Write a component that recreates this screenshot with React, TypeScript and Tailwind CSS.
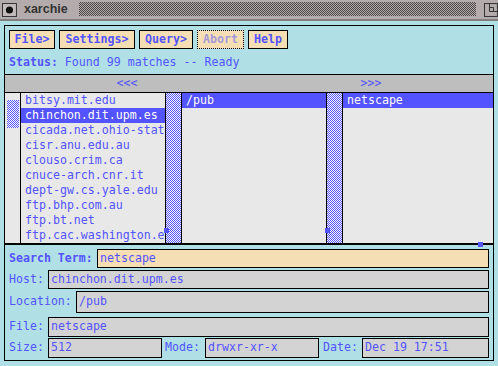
import React from 'react';

const mono = "font-['DejaVu_Sans_Mono',monospace] text-[11.6px]";

const hosts = [
  'bitsy.mit.edu',
  'chinchon.dit.upm.es',
  'cicada.net.ohio-state.edu',
  'cisr.anu.edu.au',
  'clouso.crim.ca',
  'cnuce-arch.cnr.it',
  'dept-gw.cs.yale.edu',
  'ftp.bhp.com.au',
  'ftp.bt.net',
  'ftp.cac.washington.edu',
];

// 1px stipple, drawn as an svg pattern so it stays crisp.
// `flip` shifts the phase so stipples line up with the window origin.
function Stipple({
  id,
  fg,
  bg,
  className,
  flip,
}: {
  id: string;
  fg: string;
  bg: string;
  className: string;
  flip?: boolean;
}) {
  const a = flip ? 0 : 1;
  const b = flip ? 1 : 0;
  return (
    <svg className={'block ' + className} shapeRendering="crispEdges">
      <defs>
        <pattern id={id} width="2" height="2" patternUnits="userSpaceOnUse">
          <rect width="2" height="2" fill={bg} />
          <rect x={a} y="0" width="1" height="1" fill={fg} />
          <rect x={b} y="1" width="1" height="1" fill={fg} />
        </pattern>
      </defs>
      <rect width="100%" height="100%" fill={`url(#${id})`} />
    </svg>
  );
}

function Row({ text, selected }: { text: string; selected?: boolean }) {
  return (
    <div
      className={
        'h-[15px] pl-[4px] flex items-center whitespace-nowrap overflow-hidden ' +
        (selected ? 'bg-[#5353ff] text-white' : 'text-[#5353ff]')
      }
    >
      {text}
    </div>
  );
}

function Button({ label, w, disabled }: { label: string; w: string; disabled?: boolean }) {
  return (
    <div
      className={
        'h-[19px] flex items-center justify-center bg-[#f5deb3] font-bold ' +
        w +
        (disabled
          ? ' border border-dotted border-black text-[#5353ff]/50'
          : ' border border-black text-[#5353ff]')
      }
    >
      {label}
    </div>
  );
}

function Field({ value, w, h = 'h-[19px]', wheat }: { value: string; w: string; h?: string; wheat?: boolean }) {
  return (
    <div
      className={
        'flex items-center pl-[2px] border border-black text-[#5353ff] whitespace-nowrap ' +
        w +
        ' ' +
        h +
        (wheat ? ' bg-[#f5deb3]' : ' bg-[#d3d3d3]')
      }
    >
      {value}
    </div>
  );
}

export default function App() {
  return (
    <div className={'w-[498px] h-[366px] bg-[#b0e0e6] overflow-hidden ' + mono}>
      {/* Title bar */}
      <div className="h-[19px] bg-[#b4acac] flex items-start">
        <svg width="15" height="14" viewBox="0 0 15 14" className="mt-[3px] ml-[2px]">
          <rect x="0.5" y="0.5" width="14" height="13" fill="#c4bcbc" stroke="#333" />
          <circle cx="7.5" cy="7" r="3.6" fill="#111" />
        </svg>
        <span className="ml-[7px] mt-[1px] font-['Liberation_Sans',sans-serif] font-bold text-[12.5px] leading-[16px] text-[#333]">
          xarchie
        </span>
        <Stipple id="title" fg="#4d4848" bg="#b4acac" className="ml-[11px] mt-[2px] h-[14px] w-[399px]" />
        <svg width="14" height="14" viewBox="0 0 14 14" className="ml-[8px] mt-[3px]">
          <rect x="0.5" y="0.5" width="13" height="13" fill="none" stroke="#333" />
          <path d="M5.5 0.5V8.5H13.5M5.5 4.5H9.5V8.5" fill="none" stroke="#333" />
        </svg>
      </div>
      <div className="h-[2px] bg-[#837d7d]" />

      {/* Main frame */}
      <div className="mt-[4px] ml-[4px] w-[490px] h-[336px] border border-black flex flex-col">
        {/* Menu and status */}
        <div className="h-[49px] border-b border-black pt-[4px] pl-[4px]">
          <div className="flex gap-[4px]">
            <Button label="File>" w="w-[46px]" />
            <Button label="Settings>" w="w-[76px]" />
            <Button label="Query>" w="w-[54px]" />
            <Button label="Abort" w="w-[47px]" disabled />
            <Button label="Help" w="w-[40px]" />
          </div>
          <div className="mt-[6px] leading-[14px] text-[#5353ff] whitespace-pre">
            <span className="font-bold">Status:</span> Found 99 matches -- Ready
          </div>
        </div>

        {/* Arrow bar */}
        <div className="h-[18px] border-b border-black bg-[#bebebe] flex text-[#5353ff]">
          <div className="flex-1 flex items-center justify-center">&lt;&lt;&lt;</div>
          <div className="flex-1 flex items-center justify-center">&gt;&gt;&gt;</div>
        </div>

        {/* Lists */}
        <div className="relative h-[152px] border-b-2 border-black flex bg-[#e8e8e8]">
          <div className="w-[16px] border-r border-black relative shrink-0">
            <Stipple
              id="thumb1"
              fg="#5353ff"
              bg="#ffffff"
              className="absolute left-[2px] top-[7px] w-[12px] h-[28px]"
            />
          </div>
          <div className="w-[145px] border-r border-black shrink-0 overflow-hidden">
            {hosts.map((h, i) => (
              <Row key={h} text={h} selected={i === 1} />
            ))}
          </div>
          <div className="w-[16px] border-r border-black shrink-0">
            <Stipple id="thumb2" fg="#5353ff" bg="#ffffff" className="w-[15px] h-[150px]" />
          </div>
          <div className="w-[145px] border-r border-black shrink-0">
            <Row text="/pub" selected />
          </div>
          <div className="w-[16px] border-r border-black shrink-0">
            <Stipple id="thumb3" fg="#5353ff" bg="#ffffff" flip className="w-[15px] h-[150px]" />
          </div>
          <div className="flex-1">
            <Row text="netscape" selected />
          </div>
          <div className="absolute left-[159px] top-[135px] w-[5px] h-[5px] bg-[#5353ff]" />
          <div className="absolute left-[320px] top-[135px] w-[5px] h-[5px] bg-[#5353ff]" />
          <div className="absolute left-[473px] top-[149px] w-[5px] h-[5px] bg-[#5353ff]" />
        </div>

        {/* Details form */}
        <div className="flex-1 pt-[4px] pl-[4px] pr-[4px] text-[#5353ff]">
          <div className="flex items-center">
            <span className="w-[88px] font-bold">Search Term:</span>
            <Field value="netscape" w="flex-1" wheat />
          </div>
          <div className="flex items-center mt-[2px]">
            <span className="w-[39px]">Host:</span>
            <Field value="chinchon.dit.upm.es" w="flex-1" />
          </div>
          <div className="flex items-center mt-[2px]">
            <span className="w-[67px]">Location:</span>
            <Field value="/pub" w="flex-1" h="h-[22px]" />
          </div>
          <div className="flex items-center mt-[4px]">
            <span className="w-[39px]">File:</span>
            <Field value="netscape" w="flex-1" h="h-[20px]" />
          </div>
          <div className="flex items-center mt-[1px]">
            <span className="w-[39px]">Size:</span>
            <Field value="512" w="w-[114px]" h="h-[20px]" />
            <span className="ml-[3px] w-[40px]">Mode:</span>
            <Field value="drwxr-xr-x" w="w-[114px]" h="h-[20px]" />
            <span className="ml-[4px] w-[39px]">Date:</span>
            <Field value="Dec 19 17:51" w="flex-1" h="h-[20px]" />
          </div>
        </div>
      </div>
    </div>
  );
}
